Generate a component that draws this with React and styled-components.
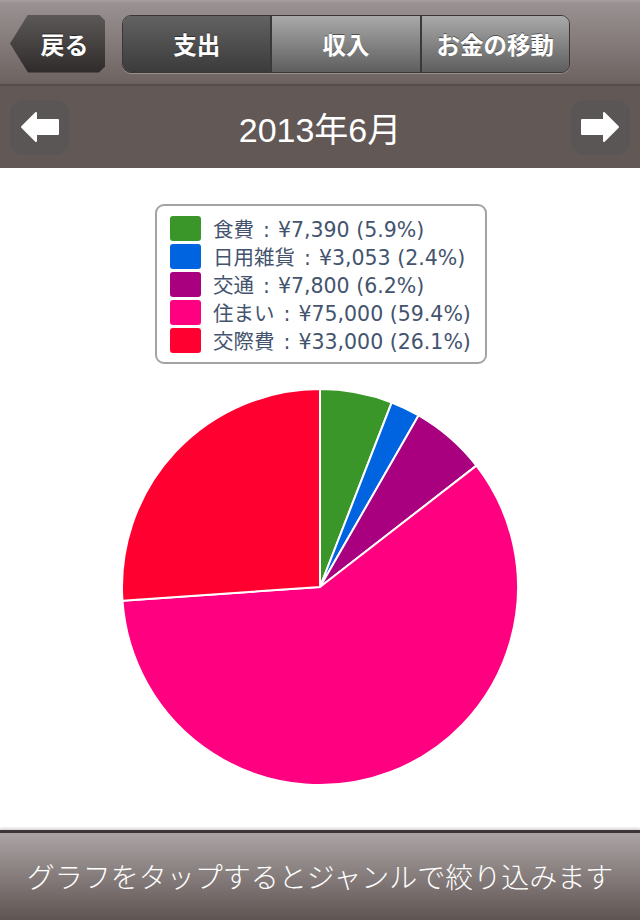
import React from "react";
import styled, { createGlobalStyle } from "styled-components";

const GlobalStyle = createGlobalStyle`
  body {
    margin: 0;
    background: #ffffff;
    font-family: "Liberation Sans", "Noto Sans CJK JP", sans-serif;
  }
`;

const Screen = styled.div`
  width: 640px;
  height: 920px;
  display: flex;
  flex-direction: column;
  overflow: hidden;
`;

const NavBar = styled.div`
  height: 86px;
  box-sizing: border-box;
  display: flex;
  align-items: center;
  gap: 17px;
  padding: 3px 10px 0 10px;
  background: linear-gradient(#a8a0a0 0px, #9a9292 3px, #6c6260 100%);
  border-bottom: 2px solid #564c4a;
`;

const BackButton = styled.div`
  width: 95px;
  height: 58px;
  box-sizing: border-box;
  display: flex;
  align-items: center;
  justify-content: center;
  padding-left: 14px;
  color: #fff;
  font-size: 24px;
  font-weight: bold;
  font-family: "Noto Sans CJK JP", sans-serif;
  background: linear-gradient(#5c5858, #2f2b2b);
  clip-path: polygon(18px 0, 89px 0, 95px 6px, 95px 52px, 89px 58px, 18px 58px, 0 29px);
  text-shadow: 0 -1px 0 rgba(0, 0, 0, 0.5);
`;

const Segmented = styled.div`
  width: 448px;
  height: 58px;
  box-sizing: border-box;
  display: flex;
  border: 1px solid #3a3636;
  border-radius: 9px;
  overflow: hidden;
  box-shadow: 0 1px 0 rgba(255, 255, 255, 0.25);
`;

const Segment = styled.div`
  flex: 1;
  display: flex;
  align-items: center;
  justify-content: center;
  color: #fff;
  font-size: 23.5px;
  font-weight: bold;
  font-family: "Noto Sans CJK JP", sans-serif;
  background: ${(p) =>
    p.$active
      ? "linear-gradient(#626262, #3b3b3b)"
      : "linear-gradient(#a9a9a9, #5e5e5e)"};
  border-left: ${(p) => (p.$first ? "none" : "2px solid #3a3838")};
  text-shadow: 0 -1px 0 rgba(0, 0, 0, 0.45);
`;

const MonthBar = styled.div`
  height: 82px;
  box-sizing: border-box;
  display: flex;
  align-items: center;
  justify-content: space-between;
  padding: 0 10px;
  background: #625856;
`;

const ArrowButton = styled.div`
  width: 59px;
  height: 55px;
  display: flex;
  align-items: center;
  justify-content: center;
  border-radius: 14px;
  background: #5a5655;
`;

const MonthTitle = styled.div`
  color: #fff;
  font-size: 34px;
  font-family: "Liberation Sans", "Noto Sans CJK JP", sans-serif;
`;

const Content = styled.div`
  flex: 1;
  display: flex;
  flex-direction: column;
  align-items: center;
  padding-top: 36px;
  background: #fff;
`;

const Legend = styled.div`
  width: 332px;
  box-sizing: border-box;
  padding: 8px 13px;
  border: 2px solid #a3a3a3;
  border-radius: 9px;
  margin-left: 2px;
`;

const LegendRow = styled.div`
  height: 28px;
  display: flex;
  align-items: center;
  gap: 12px;
  color: #44546e;
  font-size: 20.5px;
  font-family: "DejaVu Sans", "Noto Sans CJK JP", sans-serif;
  white-space: nowrap;
`;

const Swatch = styled.span`
  width: 31px;
  height: 25px;
  border-radius: 3px;
  background: ${(p) => p.$color};
  flex-shrink: 0;
`;

const Colon = styled.span`
  margin: 0 8px 0 9px;
`;

const PieWrap = styled.svg`
  margin-top: 23px;
  display: block;
`;

const Footer = styled.div`
  height: 90px;
  box-sizing: border-box;
  display: flex;
  align-items: center;
  justify-content: center;
  padding-bottom: 2px;
  border-top: 3px solid #3b3535;
  box-shadow: 0 -2px 2px rgba(0, 0, 0, 0.15);
  background: linear-gradient(#aba4a4, #5e5452);
  color: #fff;
  font-size: 28px;
  font-weight: 300;
  font-family: "Noto Sans CJK JP", sans-serif;
`;

const items = [
  { name: "食費", amount: "¥7,390", pct: 5.9, color: "#3a9628" },
  { name: "日用雑貨", amount: "¥3,053", pct: 2.4, color: "#0063e0" },
  { name: "交通", amount: "¥7,800", pct: 6.2, color: "#a8007f" },
  { name: "住まい", amount: "¥75,000", pct: 59.4, color: "#ff0080" },
  { name: "交際費", amount: "¥33,000", pct: 26.1, color: "#ff0030" },
];

const point = (cx, cy, r, deg) => {
  const a = (deg * Math.PI) / 180;
  return [cx + r * Math.sin(a), cy - r * Math.cos(a)];
};

const PieChart = () => {
  const cx = 200;
  const cy = 200;
  const r = 198;
  let start = 0;
  return (
    <PieWrap width="400" height="400" viewBox="0 0 400 400">
      {items.map((it) => {
        const sweep = (it.pct / 100) * 360;
        const end = start + sweep;
        const [x0, y0] = point(cx, cy, r, start);
        const [x1, y1] = point(cx, cy, r, end);
        const large = sweep > 180 ? 1 : 0;
        start = end;
        return (
          <path
            key={it.name}
            d={`M${cx} ${cy} L${x0} ${y0} A${r} ${r} 0 ${large} 1 ${x1} ${y1} Z`}
            fill={it.color}
            stroke="#fff"
            strokeWidth="2"
            strokeLinejoin="round"
          />
        );
      })}
    </PieWrap>
  );
};

const LeftArrow = () => (
  <svg width="40" height="32" viewBox="0 0 40 32">
    <path
      d="M2 16 L16 2 L16 9 L38 9 L38 23 L16 23 L16 30 Z"
      fill="#fff"
      stroke="#fff"
      strokeWidth="2"
      strokeLinejoin="round"
    />
  </svg>
);

const RightArrow = () => (
  <svg width="40" height="32" viewBox="0 0 40 32">
    <path
      d="M38 16 L24 2 L24 9 L2 9 L2 23 L24 23 L24 30 Z"
      fill="#fff"
      stroke="#fff"
      strokeWidth="2"
      strokeLinejoin="round"
    />
  </svg>
);

const App = () => {
  return (
    <Screen>
      <GlobalStyle />
      <NavBar>
        <BackButton>戻る</BackButton>
        <Segmented>
          <Segment $active $first>
            支出
          </Segment>
          <Segment>収入</Segment>
          <Segment>お金の移動</Segment>
        </Segmented>
      </NavBar>
      <MonthBar>
        <ArrowButton>
          <LeftArrow />
        </ArrowButton>
        <MonthTitle>2013年6月</MonthTitle>
        <ArrowButton>
          <RightArrow />
        </ArrowButton>
      </MonthBar>
      <Content>
        <Legend>
          {items.map((it) => (
            <LegendRow key={it.name}>
              <Swatch $color={it.color} />
              <span>
                {it.name}
                <Colon>:</Colon>
                {it.amount} ({it.pct}%)
              </span>
            </LegendRow>
          ))}
        </Legend>
        <PieChart />
      </Content>
      <Footer>グラフをタップするとジャンルで絞り込みます</Footer>
    </Screen>
  );
};

export default App;
